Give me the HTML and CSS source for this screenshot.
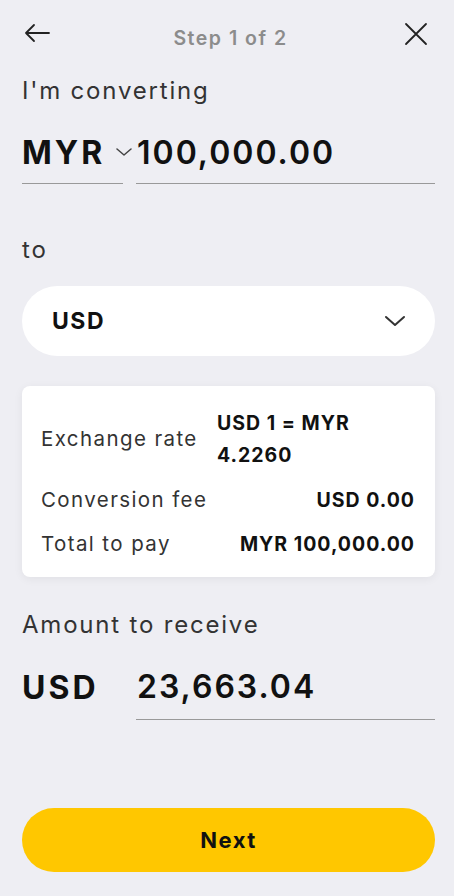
FILE: index.html
```html
<!DOCTYPE html>
<html>
<head>
<meta charset="utf-8">
<link rel="stylesheet" href="styles.css">
</head>
<body>
<div class="screen">
  <header class="topbar">
    <svg class="icon back" width="28" height="20" viewBox="0 0 28 20"><path d="M26 10H3M11 2L3 10l8 8" fill="none" stroke="#222" stroke-width="1.8" stroke-linecap="round" stroke-linejoin="round"/></svg>
    <div class="step">Step 1 of 2</div>
    <svg class="icon close" width="24" height="24" viewBox="0 0 24 24"><path d="M2 2l20 20M22 2L2 22" fill="none" stroke="#222" stroke-width="1.8" stroke-linecap="round"/></svg>
  </header>

  <div class="label first">I'm converting</div>
  <div class="amount-row">
    <div class="cur-field">
      <span class="cur">MYR</span>
      <svg width="16" height="10" viewBox="0 0 16 10"><path d="M1 2l7 6 7-6" fill="none" stroke="#444" stroke-width="1.5" stroke-linecap="round" stroke-linejoin="round"/></svg>
    </div>
    <div class="num-field"><span class="num">100,000.00</span></div>
  </div>

  <div class="label to">to</div>
  <div class="select">
    <span class="select-val">USD</span>
    <svg width="22" height="14" viewBox="0 0 22 14"><path d="M2 3l9 8 9-8" fill="none" stroke="#333" stroke-width="2" stroke-linecap="round" stroke-linejoin="round"/></svg>
  </div>

  <div class="card">
    <div class="row rate">
      <span class="k">Exchange rate</span>
      <span class="v rate-v">USD 1 = MYR<br>4.2260</span>
    </div>
    <div class="row">
      <span class="k">Conversion fee</span>
      <span class="v">USD 0.00</span>
    </div>
    <div class="row">
      <span class="k">Total to pay</span>
      <span class="v">MYR 100,000.00</span>
    </div>
  </div>

  <div class="label receive">Amount to receive</div>
  <div class="amount-row recv">
    <div class="cur-field plain"><span class="cur">USD</span></div>
    <div class="num-field"><span class="num">23,663.04</span></div>
  </div>

  <div class="spacer"></div>
  <button class="next">Next</button>
</div>
</body>
</html>
```

FILE: styles.css
```css
* { box-sizing: border-box; }
html, body { margin: 0; padding: 0; }
body {
  background: #eeeef3;
  font-family: "Inter", "Open Sans", sans-serif;
  color: #111;
  width: 454px;
  height: 896px;
  overflow: hidden;
}
.screen {
  display: flex;
  flex-direction: column;
  height: 896px;
  padding: 0 19px 24px 22px;
}
.topbar {
  display: flex;
  align-items: center;
  justify-content: space-between;
  height: 70px;
  padding: 0 7px 0 1px;
}
.back { margin-top: -4px; }
.close { margin-top: -2px; }
.step {
  font-size: 19.5px;
  font-weight: 600;
  color: #8c8c8c;
  letter-spacing: 1.5px;
  margin-top: 6px;
  margin-left: 6px;
}
.label {
  font-size: 24px;
  line-height: 29px;
  color: #333;
  letter-spacing: 1.8px;
}
.first { margin-top: 6px; }
.amount-row {
  display: flex;
  gap: 13px;
  margin-top: 26px;
  align-items: flex-end;
}
.cur-field {
  width: 101px;
  flex-shrink: 0;
  border-bottom: 1px solid #999;
  display: flex;
  align-items: center;
  gap: 11px;
  padding-bottom: 10px;
  height: 53px;
  white-space: nowrap;
}
.cur-field > * { flex-shrink: 0; }
.cur-field.plain { border-bottom: none; }
.cur {
  font-size: 32px;
  font-weight: 700;
  letter-spacing: 3px;
}
.num-field {
  flex: 1;
  border-bottom: 1px solid #999;
  height: 53px;
  padding-bottom: 10px;
  display: flex;
  align-items: center;
}
.num {
  font-size: 32px;
  font-weight: 600;
  margin-left: 1px;
  letter-spacing: 2px;
}
.to { margin-top: 51px; }
.select {
  margin-top: 22px;
  height: 70px;
  flex-shrink: 0;
  background: #fff;
  border-radius: 35px;
  display: flex;
  align-items: center;
  justify-content: space-between;
  padding: 0 29px 0 30px;
}
.select-val {
  font-size: 23px;
  font-weight: 700;
  letter-spacing: 1.5px;
}
.card {
  margin-top: 30px;
  background: #fff;
  border-radius: 8px;
  box-shadow: 0 2px 10px rgba(0,0,0,0.06);
  padding: 21px 20px 18px 19px;
  display: flex;
  flex-direction: column;
  gap: 14px;
}
.row {
  display: flex;
  justify-content: space-between;
  align-items: center;
  line-height: 30px;
}
.k { color: #333; font-size: 20.5px; letter-spacing: 1.4px; }
.v { font-weight: 700; font-size: 19.5px; letter-spacing: 1px; }
.rate-v {
  width: 198px;
  line-height: 32px;
}
.receive { margin-top: 33px; }
.recv { margin-top: 27px; }
.recv .cur-field, .recv .num-field { height: 54px; padding-bottom: 12px; }
.spacer { flex: 1; }
.next {
  height: 64px;
  flex-shrink: 0;
  border: none;
  border-radius: 32px;
  background: #ffc700;
  font-family: inherit;
  font-size: 22px;
  font-weight: 700;
  letter-spacing: 1.5px;
  color: #111;
  width: 100%;
}
```
